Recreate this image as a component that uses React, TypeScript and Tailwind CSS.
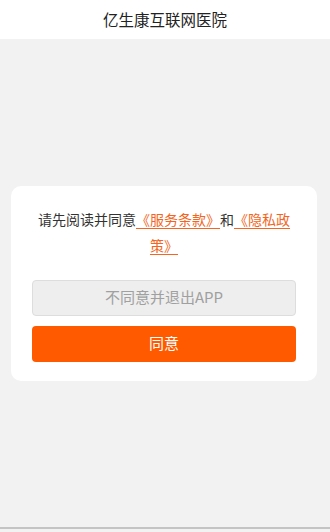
import React from "react";

const font = { fontFamily: '"Noto Sans CJK SC", "Noto Sans", sans-serif' };

const App = () => {
    return (
        <div
            className="w-[330px] h-[532px] flex flex-col bg-[#f2f2f2] overflow-hidden"
            style={font}
        >
            {/* Header */}
            <div className="h-[39px] bg-white flex items-center justify-center shrink-0">
                <span className="text-[15.5px] text-[#222] leading-none">亿生康互联网医院</span>
            </div>

            {/* Body */}
            <div className="flex-1 flex items-center pl-[11px] border-b-2 border-[#c4c4c4]">
                <div className="w-[306px] bg-white rounded-[10px] px-[21px] pt-[20px] pb-[19px] flex flex-col">
                    <p className="text-[14px] leading-[26px] text-[#333] text-center">
                        请先阅读并同意
                        <span className="text-[#f26522] underline underline-offset-[3px]">《服务条款》</span>
                        和
                        <span className="text-[#f26522] underline underline-offset-[3px]">《隐私政策》</span>
                    </p>

                    <button className="mt-[22px] h-[36px] rounded-[4px] bg-[#eeeeee] border border-[#dddddd] text-[15px] text-[#a0a0a0]">
                        不同意并退出APP
                    </button>
                    <button className="mt-[10px] h-[36px] rounded-[4px] bg-[#ff5a00] text-[15px] text-white">
                        同意
                    </button>
                </div>
            </div>
            <div className="h-[3px] shrink-0 bg-[#f2f2f2]" />
        </div>
    );
};

export default App;
